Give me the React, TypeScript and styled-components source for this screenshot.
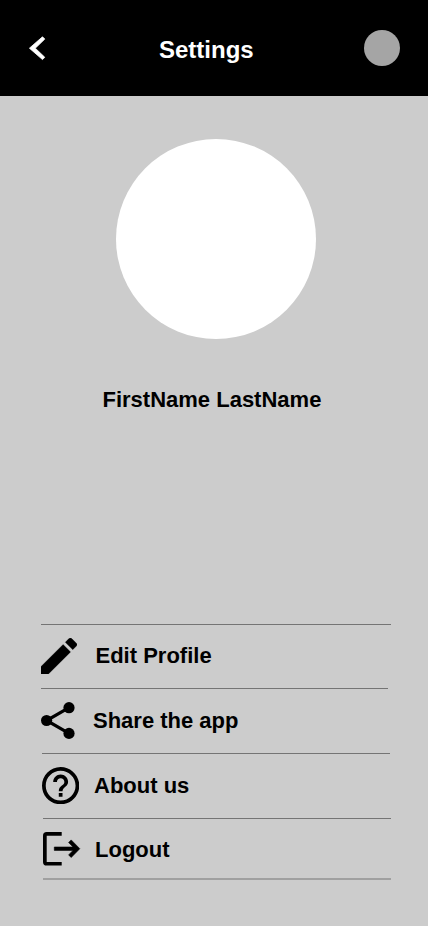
import React from "react";
import styled, { createGlobalStyle } from "styled-components";

const GlobalStyle = createGlobalStyle`
  * { box-sizing: border-box; }
  body {
    margin: 0;
    background: #cccccc;
    font-family: "Liberation Sans", Arial, sans-serif;
  }
`;

const Screen = styled.div`
  display: flex;
  flex-direction: column;
  width: 428px;
  height: 926px;
  background: #cccccc;
  color: #000;
  overflow: hidden;
`;

const Header = styled.header`
  display: grid;
  grid-template-columns: 159px 205px 36px;
  height: 96px;
  background: #000;
  color: #fff;
`;

const BackButton = styled.button`
  width: 20px;
  height: 26px;
  margin: 35px 0 0 28px;
  padding: 0;
  border: 0;
  background: none;
  color: inherit;

  svg { display: block; }
`;

const Title = styled.h1`
  margin: 36px 0 0;
  font-size: 24px;
  line-height: 28px;
  font-weight: 700;
`;

const HeaderAvatar = styled.div`
  width: 36px;
  height: 36px;
  margin-top: 30px;
  border-radius: 50%;
  background: #a5a5a5;
`;

const Profile = styled.section`
  display: flex;
  flex-direction: column;
  height: 528px;
  padding-top: 43px;
`;

const Avatar = styled.div`
  width: 200px;
  height: 200px;
  margin-left: 116px;
  border-radius: 50%;
  background: #fff;
`;

const Name = styled.h2`
  margin: 48px 0 0 102.5px;
  font-size: 22px;
  line-height: 26px;
  font-weight: 700;
  white-space: nowrap;
`;

const Menu = styled.nav`
  display: flex;
  flex-direction: column;
`;

const MenuRow = styled.a<{ $left: number; $width: number; $height: number }>`
  display: flex;
  align-items: flex-start;
  width: ${(p) => p.$width}px;
  height: ${(p) => p.$height}px;
  margin-left: ${(p) => p.$left}px;
  border-top: 1px solid #747474;
  color: inherit;
`;

const IconSlot = styled.span<{ $top: number; $width: number }>`
  flex: none;
  width: ${(p) => p.$width}px;
  padding-top: ${(p) => p.$top}px;

  svg { display: block; }
`;

const Label = styled.span<{ $top: number }>`
  padding-top: ${(p) => p.$top}px;
  font-size: 22px;
  line-height: 26px;
  font-weight: 700;
  white-space: nowrap;
`;

const EndLine = styled.div`
  width: 348px;
  height: 2px;
  margin-left: 43px;
  background: #a0a0a0;
`;

const BackIcon = () => (
  <svg width="20" height="26" viewBox="0 0 20 26" fill="currentColor" stroke="currentColor" strokeWidth="0.8" strokeLinejoin="round">
    <path d="M1.4 13.2L14.5 1.8L16.8 4.1L7.3 13.2L16.8 22.3L14.5 24.6Z" />
  </svg>
);

const EditIcon = () => (
  <svg width="36" height="36" viewBox="3 3 18 18">
    <path d="M3 17.25V21h3.75L17.81 9.94l-3.75-3.75L3 17.25zM20.71 7.04c.39-.39.39-1.02 0-1.41l-2.34-2.34c-.39-.39-1.02-.39-1.41 0l-1.83 1.83 3.75 3.75 1.83-1.83z" stroke="#000" strokeWidth="0.12" />
  </svg>
);

const ShareIcon = () => (
  <svg width="34" height="38" viewBox="0 0 34 38">
    <path d="M28 5.7L5.6 18.5L28 31.4" fill="none" stroke="#000" strokeWidth="3.2" />
    <circle cx="5.6" cy="18.5" r="5.6" />
    <circle cx="28" cy="5.7" r="5.6" />
    <circle cx="28" cy="31.4" r="5.6" />
  </svg>
);

const HelpIcon = () => (
  <svg width="37.3" height="37.3" viewBox="2 2 20 20">
    <path d="M11 18h2v-2h-2v2zm1-16C6.48 2 2 6.48 2 12s4.48 10 10 10 10-4.48 10-10S17.52 2 12 2zm0 18c-4.41 0-8-3.59-8-8s3.59-8 8-8 8 3.59 8 8-3.59 8-8 8zm0-14c-2.21 0-4 1.79-4 4h2c0-1.1.9-2 2-2s2 .9 2 2c0 2-3 1.75-3 5h2c0-2.25 3-2.5 3-5 0-2.21-1.79-4-4-4z" />
  </svg>
);

const LogoutIcon = () => (
  <svg width="38" height="34" viewBox="0 0 38 34">
    <path d="M18.7 0H3.7A3.7 3.7 0 0 0 0 3.7V29.9A3.7 3.7 0 0 0 3.7 33.6H18.7V29.9H3.7V3.7H18.7Z" />
    <path
      d="M36.8 16.7L28.2 25.5L25.6 22.9L30 18.4H11.3V15H30L25.6 10.5L28.2 7.9Z"
      stroke="#000"
      strokeWidth="0.6"
      strokeLinejoin="round"
    />
  </svg>
);

const items = [
  { label: "Edit Profile", icon: <EditIcon />, left: 41, width: 350, height: 64, iconTop: 13, slot: 54.5, textTop: 18 },
  { label: "Share the app", icon: <ShareIcon />, left: 41, width: 347, height: 65, iconTop: 13, slot: 52, textTop: 19 },
  { label: "About us", icon: <HelpIcon />, left: 42, width: 348, height: 65, iconTop: 13, slot: 52, textTop: 19 },
  { label: "Logout", icon: <LogoutIcon />, left: 43, width: 348, height: 60, iconTop: 13, slot: 52, textTop: 18 },
];

export default function App() {
  return (
    <>
      <GlobalStyle />
      <Screen>
        <Header>
          <BackButton aria-label="Back"><BackIcon /></BackButton>
          <Title>Settings</Title>
          <HeaderAvatar />
        </Header>
        <Profile>
          <Avatar />
          <Name>FirstName LastName</Name>
        </Profile>
        <Menu>
          {items.map((item) => (
            <MenuRow key={item.label} $left={item.left} $width={item.width} $height={item.height}>
              <IconSlot $top={item.iconTop} $width={item.slot}>{item.icon}</IconSlot>
              <Label $top={item.textTop}>{item.label}</Label>
            </MenuRow>
          ))}
          <EndLine />
        </Menu>
      </Screen>
    </>
  );
}
